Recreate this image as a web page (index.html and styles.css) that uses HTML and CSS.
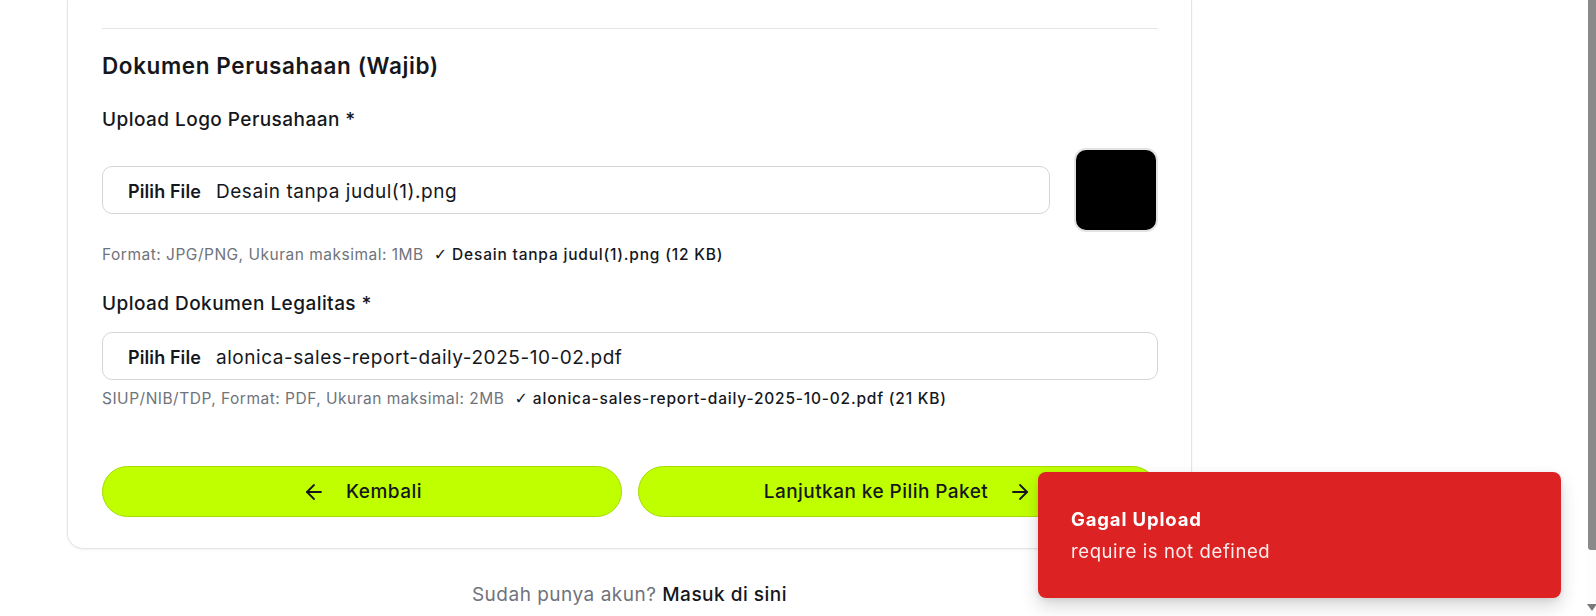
FILE: index.html
```html
<!DOCTYPE html>
<html lang="id">
<head>
<meta charset="utf-8">
<title>Registrasi - Dokumen Perusahaan</title>
<link rel="stylesheet" href="styles.css">
</head>
<body>
  <main class="column">
    <section class="card">
      <hr class="divider">
      <h2 class="section-title">Dokumen Perusahaan (Wajib)</h2>

      <div class="field field-logo">
        <label class="field-label">Upload Logo Perusahaan *</label>
        <div class="logo-row">
          <div class="file-input">
            <span class="file-btn">Pilih File</span>
            <span class="file-name">Desain tanpa judul(1).png</span>
          </div>
          <div class="logo-preview"></div>
        </div>
        <p class="help help-logo">
          <span class="help-muted">Format: JPG/PNG, Ukuran maksimal: 1MB</span>
          <span class="help-ok"><span class="check">✓</span> Desain tanpa judul(1).png (12 KB)</span>
        </p>
      </div>

      <div class="field field-legal">
        <label class="field-label">Upload Dokumen Legalitas *</label>
        <div class="file-input file-input-full">
          <span class="file-btn">Pilih File</span>
          <span class="file-name">alonica-sales-report-daily-2025-10-02.pdf</span>
        </div>
        <p class="help help-legal">
          <span class="help-muted">SIUP/NIB/TDP, Format: PDF, Ukuran maksimal: 2MB</span>
          <span class="help-ok"><span class="check">✓</span> alonica-sales-report-daily-2025-10-02.pdf (21 KB)</span>
        </p>
      </div>

      <div class="actions">
        <button class="btn" type="button">
          <svg class="btn-icon" viewBox="0 0 24 24" fill="none" stroke="currentColor" stroke-width="1.8" stroke-linecap="round" stroke-linejoin="round"><path d="M19 12H5"/><path d="m12 19-7-7 7-7"/></svg>
          <span>Kembali</span>
        </button>
        <button class="btn" type="button">
          <span>Lanjutkan ke Pilih Paket</span>
          <svg class="btn-icon" viewBox="0 0 24 24" fill="none" stroke="currentColor" stroke-width="1.8" stroke-linecap="round" stroke-linejoin="round"><path d="M5 12h14"/><path d="m12 5 7 7-7 7"/></svg>
        </button>
      </div>
    </section>

    <p class="login-note">Sudah punya akun? <a class="login-link" href="#">Masuk di sini</a></p>
  </main>

  <div class="toast" role="alert">
    <div class="toast-title">Gagal Upload</div>
    <div class="toast-body">require is not defined</div>
  </div>

  <div class="scrollbar">
    <div class="scroll-thumb"></div>
    <div class="scroll-arrow"></div>
  </div>
</body>
</html>
```
FILE: styles.css
```css
* { box-sizing: border-box; }

html, body {
  margin: 0;
  height: 616px;
  overflow: hidden;
  background: #ffffff;
}

body {
  font-family: "Inter", "Open Sans", sans-serif;
  color: #16181d;
}

.column {
  width: 1125px;
  margin-left: 67px;
}

.card {
  background: #fff;
  border: 1px solid #e3e5e8;
  border-top: none;
  border-radius: 0 0 16px 16px;
  box-shadow: 0 1px 3px rgba(0, 0, 0, 0.05);
  padding: 28px 33px 31px 34px;
}

.divider {
  margin: 0;
  border: none;
  border-top: 1px solid #e3e5e8;
  height: 0;
}

.section-title {
  margin: 22px 0 0;
  font-size: 22.5px;
  line-height: 30px;
  font-weight: 600;
  letter-spacing: 0.6px;
  color: #15171c;
}

.field-label {
  display: block;
  font-size: 19px;
  line-height: 26px;
  font-weight: 500;
  letter-spacing: 0.45px;
  color: #15171c;
}

.field-logo { margin-top: 26px; }
.field-legal { margin-top: 25px; }

.logo-row {
  margin-top: 15px;
  display: flex;
  align-items: center;
  gap: 24px;
}

.file-input {
  flex: 1;
  height: 48px;
  display: flex;
  align-items: center;
  gap: 15px;
  padding: 2px 0 0 25px;
  border: 1px solid #d4d6db;
  border-radius: 10px;
  background: #fff;
}

.file-input-full { margin-top: 15px; }

.file-btn {
  font-size: 18px;
  font-weight: 600;
  letter-spacing: 0.1px;
  color: #15171c;
}

.file-name {
  font-size: 19px;
  font-weight: 400;
  letter-spacing: 0.55px;
  color: #15171c;
}

.logo-preview {
  width: 84px;
  height: 84px;
  flex: none;
  background: #000;
  border: 2px solid #e2e3e5;
  border-radius: 12px;
}

.help {
  margin: 0;
  font-size: 15.5px;
  line-height: 22px;
  display: flex;
  gap: 10px;
}

.help-logo { margin-top: 12px; }
.help-legal { margin-top: 8px; }

.help-muted {
  color: #6f737b;
  letter-spacing: 0.5px;
}

.help-ok {
  color: #15171c;
  font-weight: 500;
  letter-spacing: 0.8px;
}

.check {
  font-family: "DejaVu Sans", sans-serif;
  font-weight: 400;
  font-size: 16px;
  letter-spacing: 0;
}

.actions {
  margin-top: 56px;
  display: flex;
  gap: 16px;
}

.btn {
  flex: 1;
  height: 51px;
  display: flex;
  align-items: center;
  justify-content: center;
  gap: 20px;
  background: #bfff00;
  border: 1px solid #a5dc00;
  border-radius: 999px;
  font-family: inherit;
  font-size: 19px;
  font-weight: 500;
  letter-spacing: 0.45px;
  color: #15171c;
  padding: 0;
}

.btn-icon {
  width: 24px;
  height: 24px;
  flex: none;
}

.login-note {
  margin: 34px 0 0;
  text-align: center;
  font-size: 19px;
  line-height: 24px;
  letter-spacing: 0.5px;
  color: #6f737b;
}

.login-link {
  color: #15171c;
  font-weight: 500;
  text-decoration: none;
}

.toast {
  position: fixed;
  left: 1038px;
  top: 472px;
  width: 523px;
  padding: 35px 33px;
  background: #dc2222;
  border-radius: 8px;
  box-shadow: 0 8px 18px rgba(0, 0, 0, 0.16), 0 2px 6px rgba(0, 0, 0, 0.08);
  color: #fff;
}

.toast-title {
  font-size: 18.5px;
  line-height: 24px;
  font-weight: 700;
  letter-spacing: 0.85px;
}

.toast-body {
  margin-top: 8px;
  font-size: 18.5px;
  line-height: 24px;
  letter-spacing: 0.6px;
  color: rgba(255, 255, 255, 0.92);
}

.scrollbar {
  position: fixed;
  top: 0;
  right: 0;
  width: 9px;
  height: 616px;
  background: #fdfdfd;
}

.scroll-thumb {
  position: absolute;
  top: 0;
  right: 0;
  width: 8px;
  height: 550px;
  background: #8a8a8a;
  border-radius: 0 0 0 3px;
}

.scroll-arrow {
  position: absolute;
  left: 0;
  top: 604px;
  width: 0;
  height: 0;
  border-left: 5px solid transparent;
  border-right: 5px solid transparent;
  border-top: 7px solid #7a7a7a;
}
```
